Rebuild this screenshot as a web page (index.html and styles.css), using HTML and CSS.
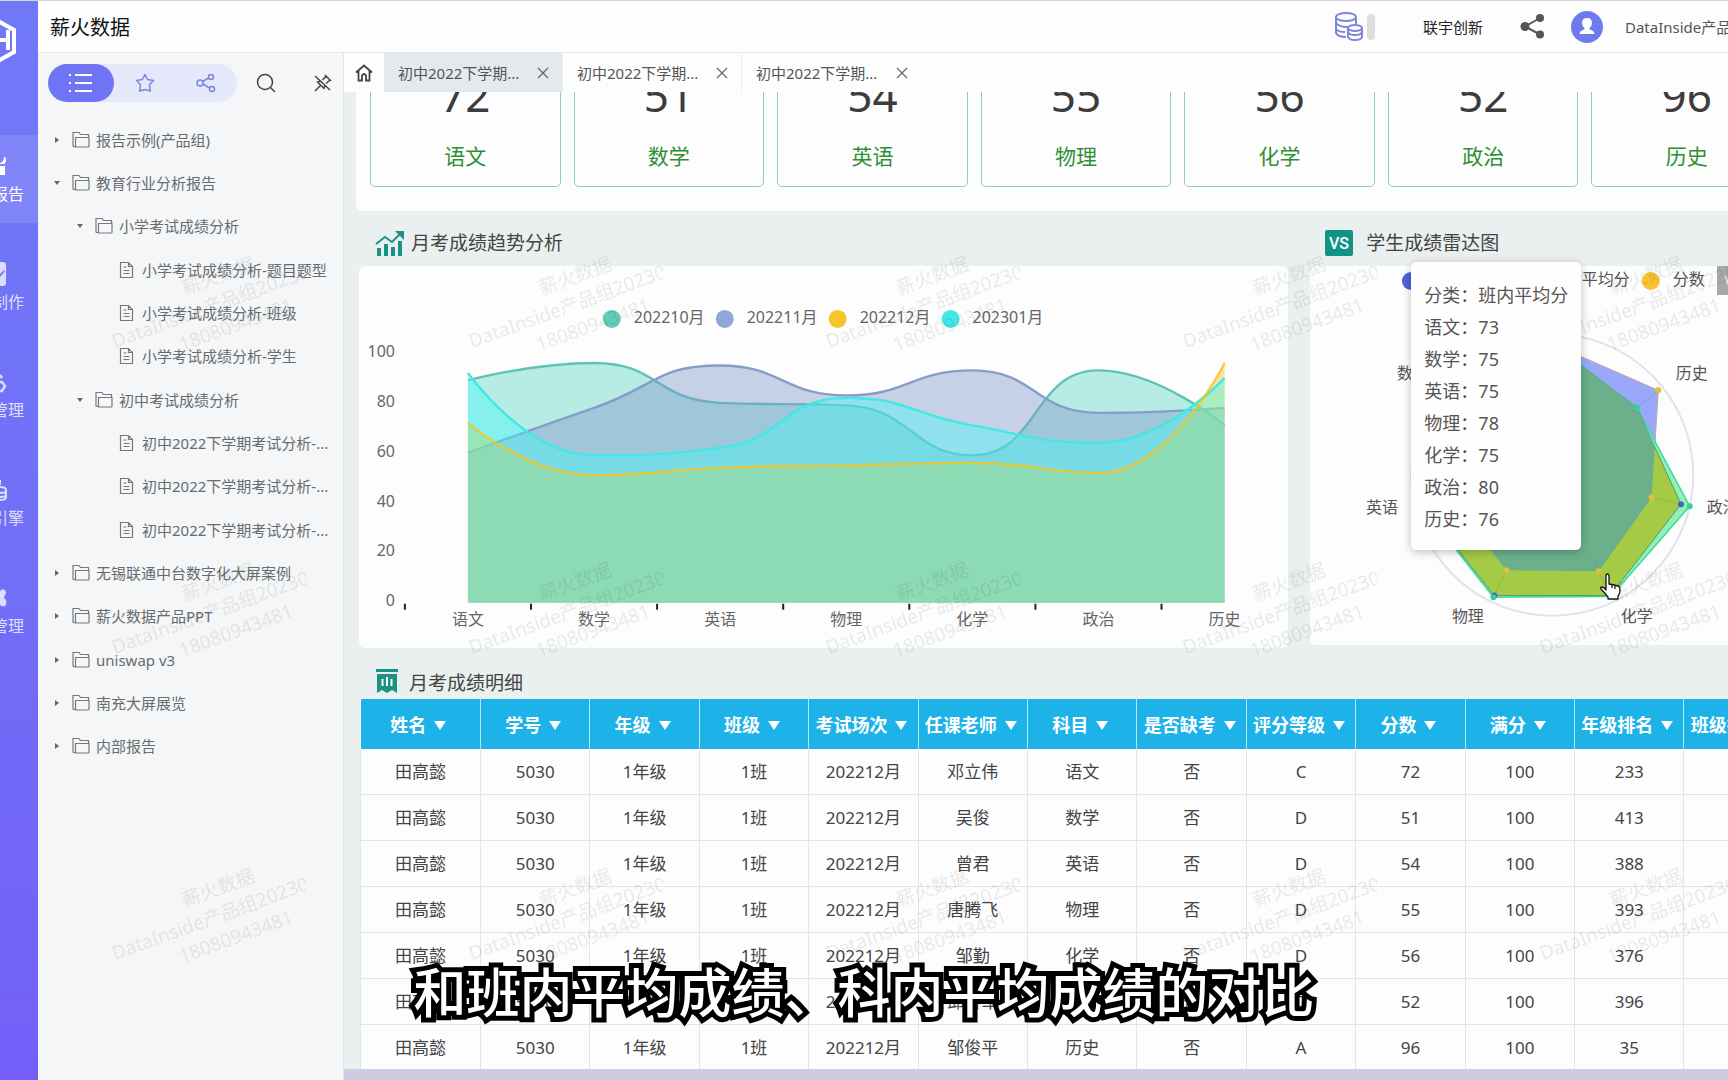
FILE: index.html
```html
<!DOCTYPE html>
<html lang="zh-CN">
<head>
<meta charset="utf-8">
<title>薪火数据</title>
<link rel="stylesheet" href="styles.css">
</head>
<body>
<svg class="symbols" aria-hidden="true">
  <symbol id="folder" viewBox="0 0 18 18"><path d="M1 15.500V1.500h6l1.500 2H16.500V6M1 15.500h2M3.500 16V6.500H17V15q0 1-1 1H3.500z"/></symbol>
  <symbol id="file" viewBox="0 0 16 18"><path d="M1.500 1.500h8l4 4v11h-12zM9.500 1.500v4h4M4.500 6h3M4.500 9.500h6M4.500 12.500h6"/></symbol>
  <symbol id="close" viewBox="0 0 12 12"><path d="M1 1l10 10M11 1L1 11"/></symbol>
</svg>
<nav class="rail">
  <div class="logo"><svg viewBox="0 0 18 46" width="18" height="46"><path d="M-2 3 14 12V34L-2 43" fill="none" stroke="#fff" stroke-width="4"/><path d="M0 22h7M8 12v20" fill="none" stroke="#fff" stroke-width="4"/></svg></div>
  <a class="rail-item on" href="#"><svg viewBox="0 0 8 24" width="8" height="24"><path d="M0 9q4-1 4-6h1q2 2 1 5h-1v2H0zM0 12h5v9H0z"/></svg><span>报告</span></a>
  <a class="rail-item" href="#"><svg viewBox="0 0 8 24" width="8" height="24"><path d="M0 0h3q3 0 3 3v18q0 3-3 3H0v-9l5-6-1-1-4 4z"/></svg><span>制作</span></a>
  <a class="rail-item" href="#"><svg viewBox="0 0 8 24" width="8" height="24"><path d="M0 5l2 3M0 12h2l3 4-3 5H0" fill="none" stroke="#dcdcff" stroke-width="2.500"/></svg><span>管理</span></a>
  <a class="rail-item" href="#"><svg viewBox="0 0 8 24" width="8" height="24"><path d="M0 2v5M0 9q6 0 6 3v7q0 3-6 3M0 15q4 0 6-1M0 19q4 0 6-1" fill="none" stroke="#dcdcff" stroke-width="2"/></svg><span>引擎</span></a>
  <a class="rail-item" href="#"><svg viewBox="0 0 8 24" width="8" height="24"><path d="M0 5q2-3 5-1 2 3 0 5l-1 3 2 2q1 4-1 6-3 1-5-1z"/></svg><span>管理</span></a>
</nav>

<div class="shell">
  <header class="top">
    <h1>薪火数据</h1>
    <svg class="db" viewBox="0 0 28 30" width="28" height="30"><g fill="none" stroke="#7b86dc" stroke-width="2"><ellipse cx="11" cy="5" rx="10" ry="4"/><path d="M1 5v16q2 4 10 4M21 5v7M1 11q3 4 12 4M1 17q2 3 9 3"/><ellipse cx="20" cy="16" rx="7" ry="3"/><path d="M13 16v9q1 3 7 3t7-3v-9M13 20q1 3 7 3t7-3"/></g></svg>
    <span class="pill"></span>
    <span class="org">联宇创新</span>
    <button class="bare share" aria-label="分享"><svg viewBox="0 0 25 25" width="25" height="25"><path d="M20 4 5 12.500 20 20.500" fill="none" stroke="#555" stroke-width="2"/><g fill="#555"><circle cx="20" cy="4" r="4"/><circle cx="5" cy="12.500" r="4.500"/><circle cx="20" cy="20.500" r="4"/></g></svg></button>
    <svg class="avatar" viewBox="0 0 32 32" width="32" height="32"><circle cx="16" cy="16" r="16" fill="#6f7aee"/><path d="M16 7q5 0 5 5 0 3-2.500 5v1.500q5 1 5 4.500H8.500q0-3.500 5-4.500V17Q11 15 11 12q0-5 5-5z" fill="#fff"/></svg>
    <span class="user">DataInside产品组</span>
  </header>

  <div class="body">
    <aside class="side">
      <div class="tools">
        <div class="seg">
          <button class="seg-on" aria-label="目录"><svg viewBox="0 0 26 20" width="26" height="20"><path d="M7 2h17M7 10h17M7 18h17M1 2h2M1 10h2M1 18h2" stroke="#fff" stroke-width="2"/></svg></button>
          <button aria-label="收藏"><svg viewBox="0 0 20 20" width="20" height="20"><path d="M10 1.500l2.600 5 5.900 1-4 4.200.8 6.300-5.300-1.500-5.300 1.500.8-6.300-4-4.200 5.900-1z" fill="none" stroke="#7b86dc" stroke-width="1.500" stroke-linejoin="round"/></svg></button>
          <button aria-label="分享"><svg viewBox="0 0 20 20" width="20" height="20"><g fill="none" stroke="#7b86dc" stroke-width="1.500"><circle cx="4" cy="10" r="3"/><circle cx="15" cy="4" r="2.500"/><circle cx="16" cy="16" r="2.500"/><path d="M6.500 8.500l6-3.500M7 11l6.500 4"/></g></svg></button>
        </div>
        <button class="bare search" aria-label="搜索"><svg viewBox="0 0 20 20" width="20" height="20"><g fill="none" stroke="#444" stroke-width="1.500"><circle cx="9" cy="9" r="7.500"/><path d="M14.500 14.500 19 19"/></g></svg></button>
        <button class="bare" aria-label="固定"><svg viewBox="0 0 20 20" width="20" height="20"><path d="M2 3l15 14M12 2l6 6M13 3l-3.500 4M17 7l-4 3.500M4 8.500l7.500 7.500M5 9l3-1M11 15l1-3M7.500 12.500 2 18" fill="none" stroke="#444" stroke-width="1.500"/></svg></button>
      </div>
      <ul class="tree" id="tree">
        <li><i class="caret"></i><svg class="ic"><use href="#folder"/></svg><a href="#">报告示例(产品组)</a></li>
        <li><i class="caret open"></i><svg class="ic"><use href="#folder"/></svg><a href="#">教育行业分析报告</a></li>
        <li class="l1"><i class="caret open"></i><svg class="ic"><use href="#folder"/></svg><a href="#">小学考试成绩分析</a></li>
        <li class="l2"><svg class="ic doc"><use href="#file"/></svg><a href="#">小学考试成绩分析-题目题型</a></li>
        <li class="l2"><svg class="ic doc"><use href="#file"/></svg><a href="#">小学考试成绩分析-班级</a></li>
        <li class="l2"><svg class="ic doc"><use href="#file"/></svg><a href="#">小学考试成绩分析-学生</a></li>
        <li class="l1"><i class="caret open"></i><svg class="ic"><use href="#folder"/></svg><a href="#">初中考试成绩分析</a></li>
        <li class="l2"><svg class="ic doc"><use href="#file"/></svg><a href="#">初中2022下学期考试分析-...</a></li>
        <li class="l2"><svg class="ic doc"><use href="#file"/></svg><a href="#">初中2022下学期考试分析-...</a></li>
        <li class="l2"><svg class="ic doc"><use href="#file"/></svg><a href="#">初中2022下学期考试分析-...</a></li>
        <li><i class="caret"></i><svg class="ic"><use href="#folder"/></svg><a href="#">无锡联通中台数字化大屏案例</a></li>
        <li><i class="caret"></i><svg class="ic"><use href="#folder"/></svg><a href="#">薪火数据产品PPT</a></li>
        <li><i class="caret"></i><svg class="ic"><use href="#folder"/></svg><a href="#">uniswap v3</a></li>
        <li><i class="caret"></i><svg class="ic"><use href="#folder"/></svg><a href="#">南充大屏展览</a></li>
        <li><i class="caret"></i><svg class="ic"><use href="#folder"/></svg><a href="#">内部报告</a></li>
      </ul>
    </aside>

    <main class="main">
      <div class="tabs">
        <button class="home" aria-label="首页"><svg viewBox="0 0 18 18" width="18" height="18"><path d="M1 8.500 9 1.500l8 7M3.500 7v9.500h3.500v-5q2-3 4 0v5h3.500V7" fill="none" stroke="#444" stroke-width="1.800"/></svg></button>
        <div class="tab on"><a href="#">初中2022下学期...</a><button class="bare" aria-label="关闭"><svg class="x"><use href="#close"/></svg></button></div>
        <div class="tab"><a href="#">初中2022下学期...</a><button class="bare" aria-label="关闭"><svg class="x"><use href="#close"/></svg></button></div>
        <div class="tab last"><a href="#">初中2022下学期...</a><button class="bare" aria-label="关闭"><svg class="x"><use href="#close"/></svg></button></div>
      </div>

      <div class="view">
        <div class="board">
          <section class="scores">
            <div class="score"><b>72</b><span>语文</span></div>
            <div class="score"><b>51</b><span>数学</span></div>
            <div class="score"><b>54</b><span>英语</span></div>
            <div class="score"><b>55</b><span>物理</span></div>
            <div class="score"><b>56</b><span>化学</span></div>
            <div class="score"><b>52</b><span>政治</span></div>
            <div class="score"><b>96</b><span>历史</span></div>
          </section>

          <div class="charts">
            <section class="trend">
              <h2><svg viewBox="0 0 30 26" width="30" height="26"><g fill="#1a9384"><path d="M2 18h4v8H2zM9 14h4v12H9zM16 17h4v9h-4zM23 11h4v15h-4zM20 1h9v9z"/></g><path d="M1 14l9-7 7 5 9-9" fill="none" stroke="#1a9384" stroke-width="2"/></svg>月考成绩趋势分析</h2>
              <div class="card">
                <svg id="trend" class="plot" viewBox="0 0 930 382">
                  <g class="axis end"><text x="36" y="91">100</text><text x="36" y="141">80</text><text x="36" y="191">60</text><text x="36" y="241">40</text><text x="36" y="290">20</text><text x="36" y="340">0</text></g>
                  <g><circle cx="253" cy="53" r="9" fill="#61cdbb"/><circle cx="366" cy="53" r="9" fill="#8fa6d6"/><circle cx="479" cy="53" r="9" fill="#f5c629"/><circle cx="592" cy="53" r="9" fill="#41e8e6"/></g>
                  <g class="axis"><text x="275" y="57">202210月</text><text x="388" y="57">202211月</text><text x="501" y="57">202212月</text><text x="614" y="57">202301月</text></g>
                </svg>
              </div>
            </section>

            <section class="radar">
              <h2><svg viewBox="0 0 28 26" width="28" height="26"><rect width="28" height="26" rx="2" fill="#0f9384"/><text x="14" y="19" text-anchor="middle" class="vs">VS</text></svg>学生成绩雷达图</h2>
              <div class="card">
                <svg id="radar" class="plot" viewBox="0 0 484 379">
                  <circle cx="242.500" cy="209" r="141" fill="none" stroke="#e1e1ef" stroke-width="2"/>
                  <g><circle cx="101" cy="15" r="9" fill="#4f63dd"/><circle cx="218" cy="15" r="9" fill="#3bdc9a"/><circle cx="341" cy="15" r="9" fill="#f9c02f"/></g>
                  <g class="axis dark"><text x="240" y="19">班内平均分</text><text x="363" y="19">分数</text></g>
                  <g class="axis dark mid"><text x="103" y="113">数学</text><text x="72" y="247">英语</text><text x="158" y="356">物理</text><text x="327" y="356">化学</text><text x="413" y="247">政治</text><text x="382" y="113">历史</text></g>
                </svg>
                <button class="zoom-tool" aria-label="工具"><svg viewBox="0 0 20 20" width="20" height="20"><path d="M2 5l4 10 4-8 4 8 4-10" fill="none" stroke="#ddd" stroke-width="2"/></svg></button>
                <dl class="tip">
                  <div><dt>分类：</dt><dd>班内平均分</dd></div>
                  <div><dt>语文：</dt><dd>73</dd></div>
                  <div><dt>数学：</dt><dd>75</dd></div>
                  <div><dt>英语：</dt><dd>75</dd></div>
                  <div><dt>物理：</dt><dd>78</dd></div>
                  <div><dt>化学：</dt><dd>75</dd></div>
                  <div><dt>政治：</dt><dd>80</dd></div>
                  <div><dt>历史：</dt><dd>76</dd></div>
                </dl>
                <svg class="hand" viewBox="0 0 22 28" width="22" height="28"><path d="M7 17V3q0-2 1.500-2T10 3v8l3 .5 6 1.500q2 .5 2 3 0 5-2 7v3H9v-2q-4-5-7-8-1-2 1-2 2 0 4 3z" fill="#fff" stroke="#111" stroke-width="1.300" stroke-linejoin="round"/><path d="M13 12v3M16 13v3" stroke="#111" stroke-width="1.200"/></svg>
              </div>
            </section>
          </div>

          <section class="detail">
            <h2><svg viewBox="0 0 22 24" width="22" height="24"><path d="M0 0h22v3H0zM1 5h20v19l-5-3-5 3-5-3-5 3z" fill="#1a9384"/><path d="M6.500 10v7M11 8v9M15.500 10v7" stroke="#fff" stroke-width="2"/></svg><span>月考成绩明细</span></h2>
            <table>
              <thead><tr><th class="first">姓名</th><th>学号</th><th>年级</th><th>班级</th><th>考试场次</th><th>任课老师</th><th>科目</th><th>是否缺考</th><th>评分等级</th><th>分数</th><th>满分</th><th>年级排名</th><th>班级排名</th></tr></thead>
              <tbody>
                <tr><td>田高懿</td><td>5030</td><td>1年级</td><td>1班</td><td>202212月</td><td>邓立伟</td><td>语文</td><td>否</td><td>C</td><td>72</td><td>100</td><td>233</td><td></td></tr>
                <tr><td>田高懿</td><td>5030</td><td>1年级</td><td>1班</td><td>202212月</td><td>吴俊</td><td>数学</td><td>否</td><td>D</td><td>51</td><td>100</td><td>413</td><td></td></tr>
                <tr><td>田高懿</td><td>5030</td><td>1年级</td><td>1班</td><td>202212月</td><td>曾君</td><td>英语</td><td>否</td><td>D</td><td>54</td><td>100</td><td>388</td><td></td></tr>
                <tr><td>田高懿</td><td>5030</td><td>1年级</td><td>1班</td><td>202212月</td><td>唐腾飞</td><td>物理</td><td>否</td><td>D</td><td>55</td><td>100</td><td>393</td><td></td></tr>
                <tr><td>田高懿</td><td>5030</td><td>1年级</td><td>1班</td><td>202212月</td><td>邹勤</td><td>化学</td><td>否</td><td>D</td><td>56</td><td>100</td><td>376</td><td></td></tr>
                <tr><td>田高懿</td><td>5030</td><td>1年级</td><td>1班</td><td>202212月</td><td>邱智军</td><td>政治</td><td>否</td><td>D</td><td>52</td><td>100</td><td>396</td><td></td></tr>
                <tr><td>田高懿</td><td>5030</td><td>1年级</td><td>1班</td><td>202212月</td><td>邹俊平</td><td>历史</td><td>否</td><td>A</td><td>96</td><td>100</td><td>35</td><td></td></tr>
              </tbody>
            </table>
          </section>
        </div>
      </div>
      <div class="hbar"></div>
    </main>
  </div>
</div>

<svg class="mark" aria-hidden="true">
  <defs><pattern id="wm" x="-51" y="20" width="357" height="306" patternUnits="userSpaceOnUse">
    <g transform="translate(278 70) rotate(-20)"><text y="-19">薪火数据</text><text class="from" x="-122" y="7">DataInside产品组202307</text><text y="33">18080943481</text></g>
  </pattern></defs>
  <rect width="100%" height="100%" fill="url(#wm)"/>
</svg>
<p class="caption">和班内平均成绩、科内平均成绩的对比</p>
<script src="charts.js"></script>
</body>
</html>
```

FILE: styles.css
```css
* { box-sizing: border-box; }
body {
  margin: 0;
  height: 100vh;
  overflow: hidden;
  display: flex;
  border-top: 1px solid #d4d6d8;
  font: 15px/24px "Noto Sans", "Noto Sans CJK SC", sans-serif;
  color: #555;
  background: #fdfdfd;
}
h1, h2, p, ul, dl, dd { margin: 0; padding: 0; font-weight: 400; }
a { color: inherit; text-decoration: none; }
svg { display: block; flex: none; }
button { font: inherit; border: 0; padding: 0; background: none; color: inherit; }
.symbols { position: absolute; width: 0; height: 0; }

.rail {
  flex: none;
  width: 38px;
  overflow: hidden;
  background: linear-gradient(#7079f8, #7170f7 50%, #735ff8);
}
.logo { height: 134px; padding-top: 17px; }
.rail-item {
  display: flex;
  flex-direction: column;
  gap: 4px;
  height: 88px;
  margin-bottom: 20px;
  padding-top: 19px;
  color: #dcdcff;
  font-size: 16px;
}
.rail-item svg { fill: #dcdcff; }
.rail-item span { width: 24px; display: flex; justify-content: flex-end; white-space: nowrap; }
.rail-item.on { background: #8085f8; color: #fff; }
.rail-item.on svg { fill: #fff; }

.shell { flex: 1; min-width: 0; display: flex; flex-direction: column; }
.top {
  flex: none;
  height: 52px;
  display: flex;
  align-items: center;
  padding-left: 12px;
  border-bottom: 1px solid #e6e8ea;
  background: #fdfdfd;
  overflow: hidden;
}
.top h1 { flex: 1; padding-top: 2px; font-size: 20px; color: #111; }
.pill { width: 8px; height: 26px; margin: 0 48px 0 4px; border-radius: 4px; background: #dedede; }
.org { color: #222; }
.share { margin: 0 26px 0 37px; }
.user { flex: none; width: 103px; margin-left: 22px; overflow: hidden; white-space: nowrap; }

.body { flex: 1; min-height: 0; display: flex; }
.side { flex: none; width: 306px; background: #f4f6f8; border-right: 1px solid #e2e6e9; }
.tools { display: flex; align-items: center; padding: 11px 10px 16px 10px; }
.seg { display: flex; width: 189px; height: 38px; border-radius: 19px; background: #e5e8fb; }
.seg button { flex: 1; display: grid; place-items: center; }
.seg .seg-on { flex: none; width: 66px; border-radius: 19px; background: #6f75f5; }
.search { margin: 0 auto 0 19px; }
.tree { list-style: none; height: 650px; display: grid; grid-auto-rows: 1fr; }
.tree li { display: flex; align-items: center; padding-left: 15px; white-space: nowrap; color: #666c70; }
.tree .l1 { padding-left: 38px; }
.tree .l2 { padding-left: 81px; }
.ic { width: 18px; height: 18px; margin-right: 6px; fill: none; stroke: #74797d; stroke-width: 1.2; }
.doc { width: 16px; margin-right: 7px; }
.caret { width: 19px; }
.caret::before { content: ""; display: block; width: 0; margin-left: 2px; border: 3px solid transparent; border-left: 4px solid #666; border-right: 0; }
.caret.open::before { margin-left: 1px; border: 3px solid transparent; border-top: 4px solid #666; border-bottom: 0; }

.main { flex: 1; min-width: 0; display: flex; flex-direction: column; background: #eaf0ef; }
.tabs { flex: none; height: 39px; display: flex; background: #fdfdfd; }
.home { width: 40px; display: grid; place-items: center; }
.tab { width: 179px; display: flex; align-items: center; justify-content: space-between; padding: 0 13px 0 14px; border-right: 1px solid #eceef0; }
.tab.on { background: #e4e9ed; }
.tab.last { border: 0; }
.x { width: 12px; height: 12px; stroke: #666; stroke-width: 1.2; }

.view { flex: 1; min-height: 0; overflow: hidden; }
.board { width: 1456px; padding-left: 12px; }
.scores {
  display: flex;
  align-items: flex-end;
  gap: 13px;
  height: 119px;
  padding: 0 18px 24px 14px;
  overflow: hidden;
  border-radius: 0 0 6px 6px;
  background: #fdfdfd;
}
.score {
  flex: 1;
  height: 140px;
  display: flex;
  flex-direction: column;
  align-items: center;
  justify-content: flex-end;
  gap: 17px;
  padding-bottom: 16px;
  border: 1px solid #8accc8;
  border-radius: 5px;
}
.score b { font-weight: 400; font-size: 44px; line-height: 60px; color: #3c3c3e; }
.score span { font-size: 21px; line-height: 28px; color: #2f8f33; }

.charts { display: flex; align-items: flex-start; gap: 22px; padding: 0 6px 0 3px; }
.trend { flex: 930; }
.radar { flex: 484; }
h2 { display: flex; align-items: center; gap: 6px; font-size: 19px; line-height: 28px; color: #444; }
.trend h2 { height: 55px; padding: 8px 0 0 16px; }
.radar h2 { height: 55px; padding: 8px 0 0 15px; gap: 13px; }
.detail h2 { height: 51px; padding: 16px 0 0 16px; gap: 11px; }
.detail h2 span { padding-top: 4px; }
.vs { font: 500 16px/16px "Roboto", sans-serif; fill: #fff; }
.card { position: relative; border-radius: 6px; background: #fdfdfd; }
.plot { width: 100%; height: auto; }
.axis { font-size: 16px; fill: #666; }
.end { text-anchor: end; }
.mid { text-anchor: middle; }
.dark { fill: #555; }
.zoom-tool { position: absolute; left: 407px; top: 0; width: 40px; height: 29px; background: #a8a8aa; display: flex; align-items: center; padding-left: 6px; }
.tip {
  position: absolute;
  left: 101px;
  top: -4px;
  width: 170px;
  padding: 17px 13px 15px;
  border-radius: 5px;
  background: #fefefe;
  box-shadow: 0 2px 10px rgba(0, 0, 0, .25);
  font-size: 18px;
  line-height: 32px;
  z-index: 3;
}
.tip div { display: flex; white-space: nowrap; }
.hand { position: absolute; left: 289px; top: 307px; z-index: 3; }

.detail { padding: 0 6px 0 4px; }
table { width: 100%; table-layout: fixed; border-collapse: collapse; background: #fdfdfd; }
th { height: 50px; padding: 2px 4px 0 0; font-size: 18px; color: #fff; background: #1db2e8; border-right: 1px solid #b7e6f7; white-space: nowrap; }
th::after { content: ""; display: inline-block; margin-left: 8px; border: 6px solid transparent; border-top: 9px solid #fff; border-bottom: 0; vertical-align: 2px; }
.first { width: 120px; }
td { height: 46px; padding: 1px 0 0; text-align: center; font-size: 17px; color: #444; border: 1px solid #e3e5e7; border-top: 0; }
.hbar { flex: none; height: 11px; background: #cccde0; }

.mark { position: absolute; left: 0; top: 210px; width: 100%; height: calc(100% - 221px); pointer-events: none; }
.mark text { font-size: 19px; text-anchor: middle; fill: #000; fill-opacity: .08; }
.mark .from { text-anchor: start; }
.caption {
  position: absolute;
  left: 0;
  right: 0;
  bottom: 50px;
  text-align: center;
  font: 500 53px/80px "Noto Sans CJK SC", sans-serif;
  color: #fff;
  -webkit-text-stroke: 10px #000;
  paint-order: stroke fill;
  stroke-linejoin: round;
  z-index: 5;
}
```

FILE: charts.js
```js
const NS = 'http://www.w3.org/2000/svg';
const SUBJECTS = ['语文', '数学', '英语', '物理', '化学', '政治', '历史'];

function add(parent, tag, attrs, text) {
  const el = document.createElementNS(NS, tag);
  for (const k in attrs) el.setAttribute(k, attrs[k]);
  if (text) el.textContent = text;
  parent.appendChild(el);
  return el;
}

// Cubic smoothing through the points; control points never pass a neighbour.
function smoothPath(pts, s) {
  const clamp = (v, a, b) => Math.max(Math.min(a, b), Math.min(Math.max(a, b), v));
  let d = `M${pts[0]}`;
  let out = pts[0];
  for (let i = 1; i < pts.length; i++) {
    const p = pts[i], prev = pts[i - 1], next = pts[i + 1];
    let cin = p, nextOut = p;
    if (next) {
      const lp = Math.hypot(p[0] - prev[0], p[1] - prev[1]);
      const ln = Math.hypot(next[0] - p[0], next[1] - p[1]);
      const r = ln / (ln + lp);
      nextOut = [0, 1].map(k => clamp(p[k] + (next[k] - prev[k]) * s * r, p[k], next[k]));
      cin = [0, 1].map(k => clamp(p[k] - (nextOut[k] - p[k]) * lp / ln, prev[k], p[k]));
      nextOut = [0, 1].map(k => p[k] + (p[k] - cin[k]) * ln / lp);
    }
    d += `C${out} ${cin} ${p}`;
    out = nextOut;
  }
  return d;
}

const trend = document.getElementById('trend');
const BASE = 337, LEFT = 109, STEP = 126.2;
const series = [
  { fill: '#61d7c5', line: '#5dc3b3', alpha: 0.45, data: [89, 96, 80, 79, 59, 93, 71] },
  { fill: '#829bcd', line: '#849dca', alpha: 0.45, data: [60, 78, 95, 83, 93, 76, 78] },
  { fill: '#f0c824', line: '#f5c527', alpha: 0.45, front: true, data: [72, 51, 54, 55, 56, 52, 96] },
  { fill: '#3cfaf8', line: '#41e8e6', alpha: 0.4, data: [92, 59, 62, 82, 71, 64, 90] },
];
const front = [];
for (const s of series) {
  const pts = s.data.map((v, i) => [LEFT + i * STEP, BASE - v * 2.5]);
  const d = smoothPath(pts, 0.5);
  add(trend, 'path', { d: `${d}V${BASE}H${LEFT}Z`, fill: s.fill, 'fill-opacity': s.alpha });
  const line = add(trend, 'path', { d, fill: 'none', stroke: s.line, 'stroke-width': 2.4 });
  if (s.front) front.push(line);
}
front.forEach(line => {
  line.setAttribute('stroke-opacity', 0.85);
  trend.appendChild(line);
});
const labels = add(trend, 'g', { class: 'axis mid' });
SUBJECTS.forEach((t, i) => {
  const x = LEFT + i * STEP;
  add(labels, 'text', { x, y: 359 }, t);
  add(trend, 'path', { d: `M${x - STEP / 2} 338v6`, stroke: '#222', 'stroke-width': 2 });
});

const radar = document.getElementById('radar');
const CX = 242.5, CY = 209;
const at = (r, i) => {
  const t = i * 2 * Math.PI / 7;
  return [CX - r * Math.sin(t), CY - r * Math.cos(t)];
};
const score = [131, 108, 105, 106, 107, 102, 135.6];
const klass = [131, 133, 134, 134, 134, 132, 108];
const grade = [131, 134, 135, 136, 135, 141, 108];
const poly = rs => rs.map(at).join(' ');
const clip = add(radar, 'clipPath', { id: 'scoreClip' });
add(clip, 'polygon', { points: poly(score) });
add(radar, 'polygon', { points: poly(score), fill: '#9aa8fb', stroke: '#c0a59c', 'stroke-width': 1 });
add(radar, 'polygon', { points: poly(grade), fill: '#93efb6', stroke: '#3bdc9a', 'stroke-width': 1.5 });
add(radar, 'polygon', { points: poly(klass), fill: '#a5cb46', stroke: '#4c9a73', 'stroke-width': 1 });
add(radar, 'polygon', { points: poly(klass), fill: '#6caf8b', 'clip-path': 'url(#scoreClip)' });
SUBJECTS.forEach((_, i) => {
  add(radar, 'path', { d: `M${at(100, i)}L${at(132, i)}`, stroke: '#666', 'stroke-opacity': 0.25 });
});
[3, 5].forEach(i => add(radar, 'circle', { cx: at(klass[i], i)[0], cy: at(klass[i], i)[1], r: 3, fill: '#3f67b5' }));
[3, 5, 6].forEach(i => add(radar, 'circle', { cx: at(grade[i], i)[0], cy: at(grade[i], i)[1], r: 3, fill: '#35cf9f' }));
[3, 4, 5, 6].forEach(i => add(radar, 'circle', { cx: at(score[i], i)[0], cy: at(score[i], i)[1], r: 3, fill: '#e5bd3c' }));
```
